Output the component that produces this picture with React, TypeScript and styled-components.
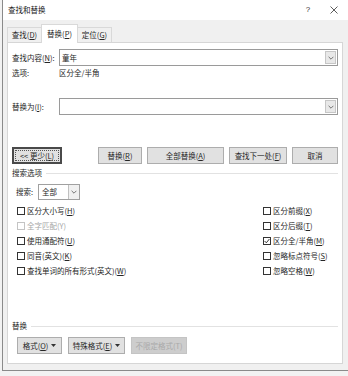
import React from "react";
import styled, { createGlobalStyle, css } from "styled-components";

const GlobalStyle = createGlobalStyle`
  html, body { margin: 0; padding: 0; background: #f2f2f2; }
  body {
    font-family: "Noto Sans CJK SC", "Noto Sans", sans-serif;
    font-size: 7.5px;
    color: #262626;
    line-height: 1;
  }
  * { box-sizing: border-box; }
`;

const Screen = styled.div`
  width: 348px;
  height: 376px;
  padding-left: 2px;
  overflow: hidden;
`;

const Window = styled.div`
  width: 346px;
  height: 371px;
  background: #f0f0f0;
  border-left: 1px solid #8a8a8a;
  border-bottom: 1px solid #8a8a8a;
  display: flex;
  flex-direction: column;
`;

const TitleBar = styled.div`
  height: 20px;
  flex: none;
  background: #ffffff;
  display: flex;
  align-items: center;
  padding-left: 5px;
  padding-right: 1px;
`;

const Title = styled.span`
  font-size: 7.5px;
  color: #1a1a1a;
`;

const TitleButton = styled.div<{ $first?: boolean }>`
  width: 26px;
  height: 20px;
  display: flex;
  align-items: center;
  justify-content: center;
  font-family: "Liberation Sans", sans-serif;
  font-size: 8px;
  color: #333;
  ${(p) => p.$first && css`margin-left: auto;`}
`;

const TabStrip = styled.div`
  height: 22px;
  flex: none;
  display: flex;
  align-items: flex-end;
  padding-left: 4px;
  position: relative;
  z-index: 1;
`;

const Tab = styled.div<{ $active?: boolean; $w: number }>`
  width: ${(p) => p.$w}px;
  height: 15px;
  display: flex;
  align-items: center;
  justify-content: center;
  border: 1px solid #d9d9d9;
  border-bottom: none;
  background: #f0f0f0;
  margin-left: -1px;
  &:first-child { margin-left: 0; }
  ${(p) =>
    p.$active &&
    css`
      height: 19px;
      background: #ffffff;
      margin-bottom: -1px;
      padding-bottom: 1px;
    `}
`;

const Panel = styled.div`
  height: 322px;
  flex: none;
  margin: 0 5px 0 4px;
  background: #ffffff;
  border: 1px solid #d6d6d6;
  display: flex;
  flex-direction: column;
  padding: 6px 4px 9px 4px;
`;

const FieldRow = styled.div<{ $mt?: number }>`
  display: flex;
  align-items: center;
  height: 17px;
  margin-top: ${(p) => p.$mt ?? 0}px;
`;

const FieldLabel = styled.span`
  width: 47px;
  flex: none;
`;

const Combo = styled.div`
  flex: 1;
  height: 17px;
  border: 1px solid #9a9a9a;
  background: #fff;
  display: flex;
  align-items: stretch;
`;

const ComboText = styled.span`
  flex: 1;
  display: flex;
  align-items: center;
  padding-left: 2px;
`;

const DropBtn = styled.div`
  width: 11px;
  flex: none;
  margin: 1px;
  background: #e8e8e8;
  border: 1px solid #c6c6c6;
  display: flex;
  align-items: center;
  justify-content: center;
`;

const OptionsRow = styled.div`
  display: flex;
  align-items: center;
  height: 14px;
`;

const ButtonRow = styled.div`
  display: flex;
  align-items: center;
  height: 17px;
  margin-top: 32px;
`;

const ButtonGroup = styled.div`
  margin-left: auto;
  display: flex;
  gap: 5px;
`;

const Button = styled.div<{ $w: number; $focused?: boolean; $disabled?: boolean }>`
  width: ${(p) => p.$w}px;
  height: 17px;
  flex: none;
  background: #e1e1e1;
  border: 1px solid #adadad;
  display: flex;
  align-items: center;
  justify-content: center;
  gap: 3px;
  position: relative;
  color: #262626;
  ${(p) =>
    p.$focused &&
    css`
      border: 2px solid #4a4a4a;
      &::after {
        content: "";
        position: absolute;
        inset: 1px;
        border: 1px dotted #555;
      }
    `}
  ${(p) =>
    p.$disabled &&
    css`
      background: #cdcdcd;
      border-color: #c4c4c4;
      color: #a9a9a9;
    `}
`;

const SectionHeader = styled.div<{ $mt: number }>`
  display: flex;
  align-items: center;
  height: 14px;
  margin-top: ${(p) => p.$mt}px;
  gap: 4px;
  &::after {
    content: "";
    flex: 1;
    height: 1px;
    background: #e2e2e2;
  }
`;

const SearchRow = styled.div`
  display: flex;
  align-items: center;
  height: 16px;
  margin-top: 4px;
  padding-left: 4px;
`;

const SearchLabel = styled.span`
  width: 22px;
`;

const Select = styled.div`
  width: 42px;
  height: 16px;
  border: 1px solid #a0a0a0;
  background: #fff;
  display: flex;
`;

const SelectText = styled.span`
  flex: 1;
  display: flex;
  align-items: center;
  padding-left: 3px;
`;

const SelectArrow = styled.div`
  width: 11px;
  border-left: 1px solid #c0c0c0;
  background: #f0f0f0;
  display: flex;
  align-items: center;
  justify-content: center;
`;

const OptionGrid = styled.div`
  margin-top: 3px;
  padding-left: 5px;
  display: grid;
  grid-template-columns: 246px 1fr;
  grid-template-rows: repeat(5, 15px);
  grid-auto-flow: column;
`;

const Check = styled.div<{ $disabled?: boolean }>`
  display: flex;
  align-items: center;
  gap: 2px;
  color: ${(p) => (p.$disabled ? "#a6a6a6" : "#262626")};
`;

const Box = styled.span<{ $disabled?: boolean }>`
  width: 8px;
  height: 8px;
  flex: none;
  border: 1px solid ${(p) => (p.$disabled ? "#c4c4c4" : "#333")};
  background: #fff;
  display: flex;
  align-items: center;
  justify-content: center;
`;

const Spacer = styled.div`
  flex: 1;
`;

const BottomButtons = styled.div`
  display: flex;
  gap: 6px;
  margin-top: 4px;
  padding-left: 5px;
`;

const U = styled.span`
  text-decoration: underline;
`;

const Chevron = () => (
  <svg width="6" height="4" viewBox="0 0 6 4">
    <path d="M0.6 0.8 L3 3.2 L5.4 0.8" fill="none" stroke="#555" strokeWidth="0.8" />
  </svg>
);

const Caret = () => (
  <svg width="5" height="3" viewBox="0 0 5 3">
    <path d="M0 0 L5 0 L2.5 3 Z" fill="#333" />
  </svg>
);

const CheckMark = () => (
  <svg width="6" height="6" viewBox="0 0 6 6">
    <path d="M0.6 3 L2.3 4.8 L5.4 1" fill="none" stroke="#222" strokeWidth="0.9" />
  </svg>
);

type Opt = { label: React.ReactNode; checked?: boolean; disabled?: boolean };

const leftOpts: Opt[] = [
  { label: <>区分大小写(<U>H</U>)</> },
  { label: <>全字匹配(Y)</>, disabled: true },
  { label: <>使用通配符(<U>U</U>)</> },
  { label: <>同音(英文)(<U>K</U>)</> },
  { label: <>查找单词的所有形式(英文)(<U>W</U>)</> },
];

const rightOpts: Opt[] = [
  { label: <>区分前缀(<U>X</U>)</> },
  { label: <>区分后缀(<U>T</U>)</> },
  { label: <>区分全/半角(<U>M</U>)</>, checked: true },
  { label: <>忽略标点符号(<U>S</U>)</> },
  { label: <>忽略空格(<U>W</U>)</> },
];

export default function App() {
  return (
    <>
      <GlobalStyle />
      <Screen>
        <Window>
          <TitleBar>
            <Title>查找和替换</Title>
            <TitleButton $first>?</TitleButton>
            <TitleButton>
              <svg width="8" height="8" viewBox="0 0 8 8">
                <path d="M0.5 0.5 L7.5 7.5 M7.5 0.5 L0.5 7.5" stroke="#333" strokeWidth="0.8" />
              </svg>
            </TitleButton>
          </TitleBar>
          <TabStrip>
            <Tab $w={35}><span>查找(<U>D</U>)</span></Tab>
            <Tab $w={37} $active><span>替换(<U>P</U>)</span></Tab>
            <Tab $w={35}><span>定位(<U>G</U>)</span></Tab>
          </TabStrip>
          <Panel>
            <FieldRow>
              <FieldLabel>查找内容(<U>N</U>):</FieldLabel>
              <Combo>
                <ComboText>童年</ComboText>
                <DropBtn><Chevron /></DropBtn>
              </Combo>
            </FieldRow>
            <OptionsRow>
              <FieldLabel>选项:</FieldLabel>
              <span>区分全/半角</span>
            </OptionsRow>
            <FieldRow $mt={18}>
              <FieldLabel>替换为(<U>I</U>):</FieldLabel>
              <Combo>
                <ComboText />
                <DropBtn><Chevron /></DropBtn>
              </Combo>
            </FieldRow>
            <ButtonRow>
              <Button $w={50} $focused><span>&lt;&lt; 更少(<U>L</U>)</span></Button>
              <ButtonGroup>
                <Button $w={44}><span>替换(<U>R</U>)</span></Button>
                <Button $w={77}><span>全部替换(<U>A</U>)</span></Button>
                <Button $w={58}><span>查找下一处(<U>F</U>)</span></Button>
                <Button $w={46}><span>取消</span></Button>
              </ButtonGroup>
            </ButtonRow>
            <SectionHeader $mt={2}>搜索选项</SectionHeader>
            <SearchRow>
              <SearchLabel>搜索:</SearchLabel>
              <Select>
                <SelectText>全部</SelectText>
                <SelectArrow><Chevron /></SelectArrow>
              </Select>
            </SearchRow>
            <OptionGrid>
              {[...leftOpts, ...rightOpts].map((o, i) => (
                <Check key={i} $disabled={o.disabled}>
                  <Box $disabled={o.disabled}>{o.checked && <CheckMark />}</Box>
                  <span>{o.label}</span>
                </Check>
              ))}
            </OptionGrid>
            <Spacer />
            <SectionHeader $mt={0}>替换</SectionHeader>
            <BottomButtons>
              <Button $w={45}><span>格式(<U>O</U>)</span><Caret /></Button>
              <Button $w={57}><span>特殊格式(<U>E</U>)</span><Caret /></Button>
              <Button $w={56} $disabled><span>不限定格式(T)</span></Button>
            </BottomButtons>
          </Panel>
        </Window>
      </Screen>
    </>
  );
}
